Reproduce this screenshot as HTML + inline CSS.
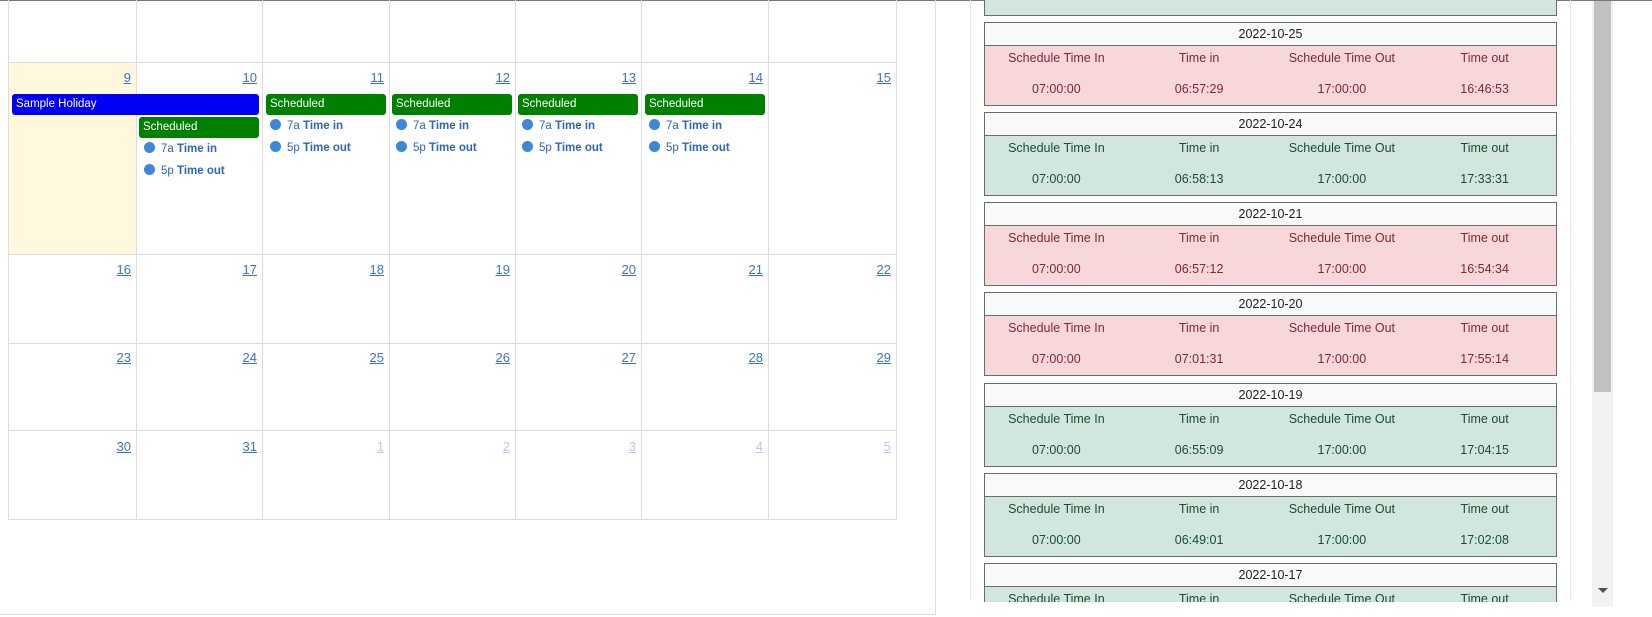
<!DOCTYPE html>
<html><head><meta charset="utf-8"><style>
*{margin:0;padding:0;box-sizing:border-box}
body{width:1652px;height:617px;overflow:hidden;background:#fff;font-family:"Liberation Sans",sans-serif;position:relative}
.a{position:absolute}
.vl{position:absolute;width:1px;background:#dcdcdc}
.hl{position:absolute;height:1px;background:#dcdcdc}
.dn{position:absolute;font-size:13px;color:#3a73c4;text-decoration:underline;text-align:right;width:40px}
.dn.f{color:#b5c9e8}
.ev{position:absolute;height:21px;border-radius:3px;color:#fff;font-size:11.5px;line-height:21px;padding-left:4px}
.it{position:absolute;font-size:11.5px;color:#2f65b8;height:16px;line-height:16px}
.it i{display:inline-block;width:11px;height:11px;border-radius:50%;background:#3c87d8;vertical-align:-1px;margin-right:6px}
.it b{font-weight:bold}
.card{position:absolute;left:984px;width:573px;height:84px;border:1px solid #6b6b6b}
.card .h{height:23px;background:#f8f9fa;border-bottom:1px solid #6b6b6b;text-align:center;font-size:12.5px;line-height:22px;color:#222}
.card .b{height:59px;display:flex;font-size:12.5px}
.card .b div{flex:1;text-align:center}
.card .b div p{height:29px;line-height:24px}
.card .b div p+p{line-height:28px}
.r .b{background:#f8d7da;color:#7a2a30}
.g .b{background:#d1e7dd;color:#1d4a35}
</style></head><body>
<div class="a" style="left:0;top:0;width:1652px;height:1px;background:#777"></div>
<!-- left panel border -->
<div class="a" style="left:0;top:0;width:936px;height:615px;border-right:1px solid #ddd;border-bottom:1px solid #ddd"></div>
<div class="a" style="left:9px;top:62px;width:127px;height:192px;background:#fff8dd"></div>
<!-- grid -->
<div class="vl" style="left:8px;top:0;height:520px"></div>
<div class="vl" style="left:136px;top:0;height:520px"></div>
<div class="vl" style="left:262px;top:0;height:520px"></div>
<div class="vl" style="left:389px;top:0;height:520px"></div>
<div class="vl" style="left:515px;top:0;height:520px"></div>
<div class="vl" style="left:641px;top:0;height:520px"></div>
<div class="vl" style="left:768px;top:0;height:520px"></div>
<div class="vl" style="left:896px;top:0;height:520px"></div>
<div class="hl" style="left:8px;top:62px;width:889px"></div>
<div class="hl" style="left:8px;top:254px;width:889px"></div>
<div class="hl" style="left:8px;top:343px;width:889px"></div>
<div class="hl" style="left:8px;top:430px;width:889px"></div>
<div class="hl" style="left:8px;top:519px;width:889px"></div>
<!-- day numbers -->
<div class="dn" style="left:91px;top:70px">9</div><div class="dn" style="left:217px;top:70px">10</div><div class="dn" style="left:344px;top:70px">11</div><div class="dn" style="left:470px;top:70px">12</div><div class="dn" style="left:596px;top:70px">13</div><div class="dn" style="left:723px;top:70px">14</div><div class="dn" style="left:851px;top:70px">15</div>
<div class="dn" style="left:91px;top:262px">16</div><div class="dn" style="left:217px;top:262px">17</div><div class="dn" style="left:344px;top:262px">18</div><div class="dn" style="left:470px;top:262px">19</div><div class="dn" style="left:596px;top:262px">20</div><div class="dn" style="left:723px;top:262px">21</div><div class="dn" style="left:851px;top:262px">22</div>
<div class="dn" style="left:91px;top:350px">23</div><div class="dn" style="left:217px;top:350px">24</div><div class="dn" style="left:344px;top:350px">25</div><div class="dn" style="left:470px;top:350px">26</div><div class="dn" style="left:596px;top:350px">27</div><div class="dn" style="left:723px;top:350px">28</div><div class="dn" style="left:851px;top:350px">29</div>
<div class="dn" style="left:91px;top:439px">30</div><div class="dn" style="left:217px;top:439px">31</div><div class="dn f" style="left:344px;top:439px">1</div><div class="dn f" style="left:470px;top:439px">2</div><div class="dn f" style="left:596px;top:439px">3</div><div class="dn f" style="left:723px;top:439px">4</div><div class="dn f" style="left:851px;top:439px">5</div>
<!-- events -->
<div class="ev" style="left:12px;top:94px;width:247px;background:#0000f5">Sample Holiday</div>
<div class="ev" style="left:139px;top:117px;width:120px;background:#008000">Scheduled</div>
<div class="ev" style="left:266px;top:94px;width:120px;background:#008000">Scheduled</div>
<div class="ev" style="left:392px;top:94px;width:120px;background:#008000">Scheduled</div>
<div class="ev" style="left:518px;top:94px;width:120px;background:#008000">Scheduled</div>
<div class="ev" style="left:645px;top:94px;width:120px;background:#008000">Scheduled</div>
<div class="it" style="left:144px;top:141px"><i></i>7a <b>Time in</b></div>
<div class="it" style="left:144px;top:163px"><i></i>5p <b>Time out</b></div>
<div class="it" style="left:270px;top:118px"><i></i>7a <b>Time in</b></div>
<div class="it" style="left:270px;top:140px"><i></i>5p <b>Time out</b></div>
<div class="it" style="left:396px;top:118px"><i></i>7a <b>Time in</b></div>
<div class="it" style="left:396px;top:140px"><i></i>5p <b>Time out</b></div>
<div class="it" style="left:522px;top:118px"><i></i>7a <b>Time in</b></div>
<div class="it" style="left:522px;top:140px"><i></i>5p <b>Time out</b></div>
<div class="it" style="left:649px;top:118px"><i></i>7a <b>Time in</b></div>
<div class="it" style="left:649px;top:140px"><i></i>5p <b>Time out</b></div>
<!-- right panel -->
<div class="a" style="left:970px;top:0;width:1px;height:600px;background:#e6e6e6"></div>
<div class="a" style="left:1570px;top:0;width:1px;height:600px;background:#e6e6e6"></div>
<div class="a" style="left:1592px;top:1px;width:21px;height:606px;background:#f1f1f1"></div>
<div class="a" style="left:1594px;top:1px;width:17px;height:391px;background:#c1c1c1"></div>
<div class="a" style="left:1598px;top:588px;width:0;height:0;border-left:5px solid transparent;border-right:5px solid transparent;border-top:5px solid #505050"></div>
<div class="a" style="left:984px;top:-5px;width:573px;height:21px;border:1px solid #6b6b6b;background:#d1e7dd"></div>
<div style="position:absolute;left:0;top:0;width:1590px;height:602px;overflow:hidden">
<div class="card r" style="top:22px"><div class="h">2022-10-25</div><div class="b"><div><p>Schedule Time In</p><p>07:00:00</p></div><div><p>Time in</p><p>06:57:29</p></div><div><p>Schedule Time Out</p><p>17:00:00</p></div><div><p>Time out</p><p>16:46:53</p></div></div></div>
<div class="card g" style="top:112px"><div class="h">2022-10-24</div><div class="b"><div><p>Schedule Time In</p><p>07:00:00</p></div><div><p>Time in</p><p>06:58:13</p></div><div><p>Schedule Time Out</p><p>17:00:00</p></div><div><p>Time out</p><p>17:33:31</p></div></div></div>
<div class="card r" style="top:202px"><div class="h">2022-10-21</div><div class="b"><div><p>Schedule Time In</p><p>07:00:00</p></div><div><p>Time in</p><p>06:57:12</p></div><div><p>Schedule Time Out</p><p>17:00:00</p></div><div><p>Time out</p><p>16:54:34</p></div></div></div>
<div class="card r" style="top:292px"><div class="h">2022-10-20</div><div class="b"><div><p>Schedule Time In</p><p>07:00:00</p></div><div><p>Time in</p><p>07:01:31</p></div><div><p>Schedule Time Out</p><p>17:00:00</p></div><div><p>Time out</p><p>17:55:14</p></div></div></div>
<div class="card g" style="top:383px"><div class="h">2022-10-19</div><div class="b"><div><p>Schedule Time In</p><p>07:00:00</p></div><div><p>Time in</p><p>06:55:09</p></div><div><p>Schedule Time Out</p><p>17:00:00</p></div><div><p>Time out</p><p>17:04:15</p></div></div></div>
<div class="card g" style="top:473px"><div class="h">2022-10-18</div><div class="b"><div><p>Schedule Time In</p><p>07:00:00</p></div><div><p>Time in</p><p>06:49:01</p></div><div><p>Schedule Time Out</p><p>17:00:00</p></div><div><p>Time out</p><p>17:02:08</p></div></div></div>
<div class="card g" style="top:563px"><div class="h">2022-10-17</div><div class="b"><div><p>Schedule Time In</p><p>07:00:00</p></div><div><p>Time in</p><p>06:50:00</p></div><div><p>Schedule Time Out</p><p>17:00:00</p></div><div><p>Time out</p><p>17:00:00</p></div></div></div>
</div>
</body></html>
